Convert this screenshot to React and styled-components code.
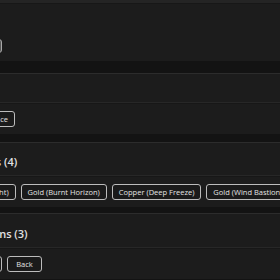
import React from "react";
import styled, { createGlobalStyle } from "styled-components";

const GlobalStyle = createGlobalStyle`
  html, body {
    margin: 0;
    padding: 0;
    background: #131313;
    overflow: hidden;
  }
  body {
    font-family: "Open Sans", Lato, sans-serif;
    color: #e4e4e4;
  }
`;

const sections = [
  {
    id: "ranks",
    title: "Current Ranks (4)",
    header: 33,
    gap: 8,
    roomy: false,
    items: [
      "Silver (Phantom Sight)",
      "Gold (Burnt Horizon)",
      "Copper (Deep Freeze)",
      "Gold (Wind Bastion)",
    ],
  },
  {
    id: "skins",
    title: "Purchased Skins (3)",
    header: 34,
    gap: 6,
    roomy: true,
    items: ["Open Collections", "Back"],
  },
];

export default function App() {
  return (
    <>
      <GlobalStyle />
      <Page>
        <Card $gap={0} $topLine>
          <Body $height={58}>
            <Button $filled>Change Loadouts</Button>
          </Body>
        </Card>
        <Card $gap={12}>
          <Header $height={29} />
          <Body>
            <Button>Operator Appearance</Button>
          </Body>
        </Card>
        {sections.map((s) => (
          <Card key={s.id} $gap={s.gap}>
            <Header $height={s.header} $titled>
              <Title>{s.title}</Title>
            </Header>
            <Body>
              {s.items.map((item) => (
                <Button key={item} $roomy={s.roomy}>
                  {item}
                </Button>
              ))}
            </Body>
          </Card>
        ))}
      </Page>
    </>
  );
}

const Page = styled.div`
  display: flex;
  flex-direction: column;
  margin-left: -75px;
  width: 640px;
`;

const Card = styled.section`
  margin-top: ${(p) => p.$gap}px;
  background: #1c1c1c;
  border-top: ${(p) => (p.$topLine ? "3px solid #242424" : "1px solid #2c2c2c")};
`;

const Header = styled.div`
  height: ${(p) => p.$height}px;
  box-sizing: border-box;
  display: flex;
  align-items: center;
  padding-top: ${(p) => (p.$titled ? 5 : 0)}px;
  border-bottom: 1px solid #272727;
`;

const Title = styled.h3`
  margin: 0;
  font-size: 11px;
  font-weight: 600;
  color: #e2e2e2;
  white-space: nowrap;
`;

const Body = styled.div`
  display: flex;
  flex-wrap: nowrap;
  align-items: ${(p) => (p.$height ? "flex-end" : "center")};
  gap: 5px;
  box-sizing: border-box;
  height: ${(p) => p.$height || 31}px;
  padding: ${(p) => (p.$height ? "0 0 8px" : "7px 0")};
  border-top: 1px solid #171717;
`;

const Button = styled.button`
  flex: none;
  height: ${(p) => (p.$filled ? 14 : 16)}px;
  padding: ${(p) => (p.$filled ? "0 7px" : p.$roomy ? "0 8px" : "0 6px")};
  border: 1px solid ${(p) => (p.$filled ? "#a8a8a8" : "#bcbcbc")};
  border-radius: 3px;
  background: ${(p) => (p.$filled ? "#555555" : "#1a1a1a")};
  color: #e4e4e4;
  font-family: "Open Sans", Lato, sans-serif;
  font-size: 7.5px;
  white-space: nowrap;
  cursor: pointer;
`;
